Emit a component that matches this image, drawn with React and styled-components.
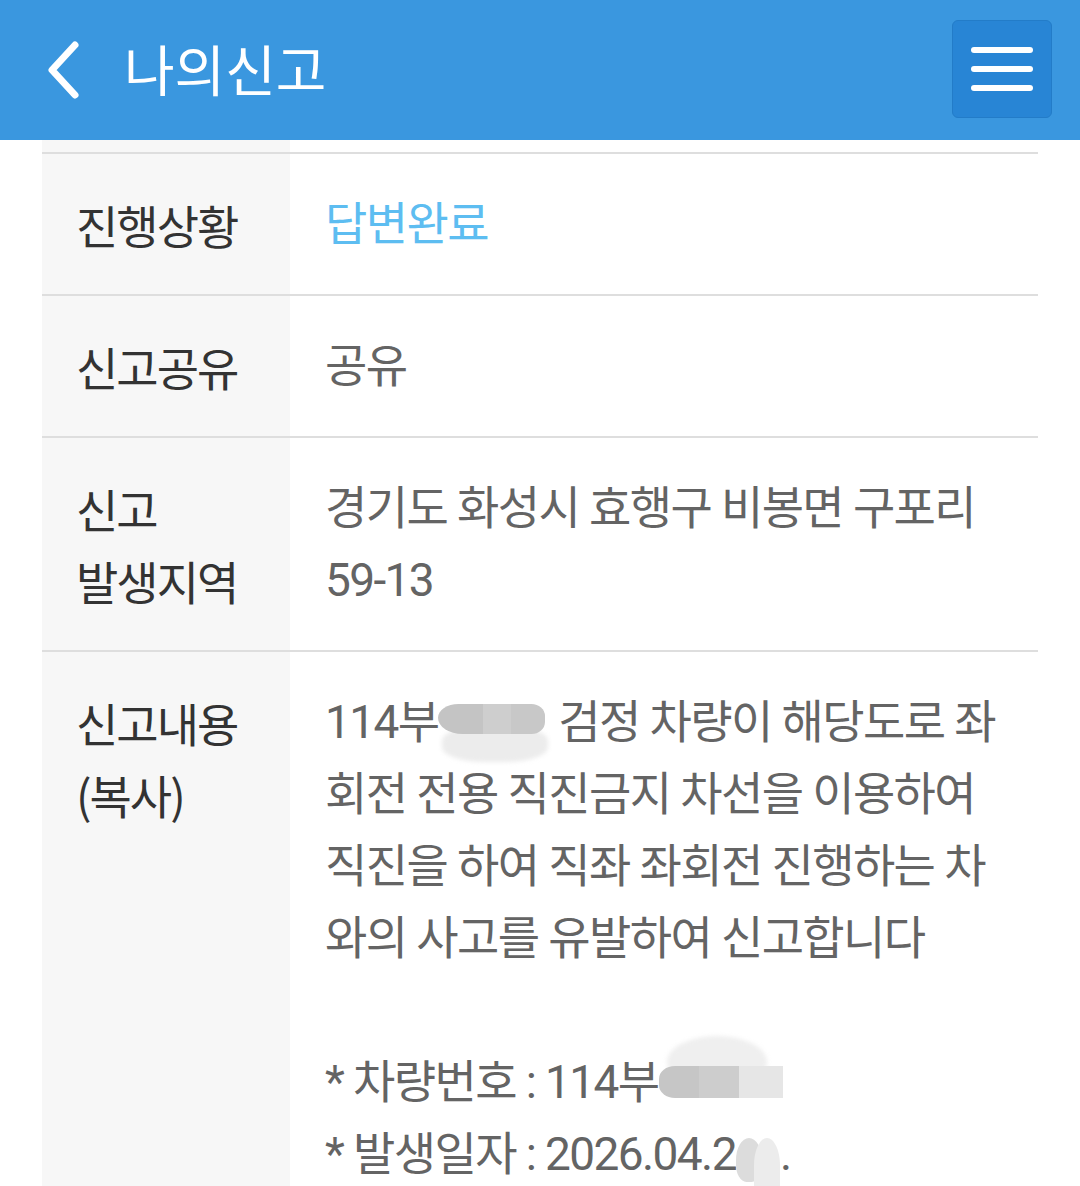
import React from 'react';
import styled, { createGlobalStyle } from 'styled-components';

const GlobalStyle = createGlobalStyle`
  html, body {
    margin: 0;
    padding: 0;
    background: #fff;
  }
  body {
    font-family: Roboto, "Noto Sans CJK KR", "Noto Sans", sans-serif;
    height: 1186px;
    overflow: hidden;
  }
`;

const Header = styled.header`
  height: 140px;
  background: #3a97df;
  display: flex;
  align-items: center;
  padding: 0 28px 0 40px;
  box-sizing: border-box;
`;

const BackButton = styled.button`
  border: 0;
  background: none;
  padding: 0;
  width: 48px;
  height: 64px;
  display: flex;
  align-items: center;
  justify-content: center;
  cursor: pointer;
`;

const Title = styled.h1`
  margin: 0 0 0 36px;
  flex: 1;
  color: #fff;
  font-family: "Noto Sans CJK KR", sans-serif;
  font-size: 55px;
  font-weight: 400;
  letter-spacing: 0;
  line-height: 1;
  padding-bottom: 6px;
`;

const MenuButton = styled.button`
  width: 100px;
  height: 98px;
  margin-top: -2px;
  background: #2885d5;
  border: 1px solid #237cc8;
  border-radius: 6px;
  display: flex;
  flex-direction: column;
  align-items: center;
  justify-content: center;
  gap: 13px;
  padding: 0;
  cursor: pointer;
`;

const MenuLine = styled.span`
  display: block;
  width: 62px;
  height: 6px;
  border-radius: 3px;
  background: #fff;
`;

const Table = styled.div`
  margin: 0 42px;
`;

const Row = styled.div`
  display: grid;
  grid-template-columns: 248px 1fr;
  border-top: 2px solid #dedede;
`;

const TopStub = styled.div`
  height: 12px;
  width: 248px;
  background: #f7f7f7;
`;

const Label = styled.div`
  background: #f7f7f7;
  color: #333;
  padding: 34px 0 34px 34px;
  font-family: "Noto Sans CJK KR", sans-serif;
  font-size: 46px;
  line-height: 72px;
  letter-spacing: -2px;
`;

const Value = styled.div`
  color: ${(p) => (p.$accent ? '#5dbdf1' : '#646464')};
  padding: 34px 0 34px 35px;
  font-size: 46px;
  line-height: 72px;
  letter-spacing: -1.6px;
  white-space: nowrap;
`;

const Line = styled.div`
  height: 72px;
`;

const Redact = styled.span`
  display: inline-block;
  position: relative;
  width: ${(p) => p.$w}px;
  height: 40px;
  vertical-align: ${(p) => p.$lift || -4}px;
`;

const Blob = styled.span`
  position: absolute;
  left: ${(p) => p.$x}px;
  top: ${(p) => p.$y}px;
  width: ${(p) => p.$w}px;
  height: ${(p) => p.$h}px;
  background: ${(p) => p.$c};
  border-radius: ${(p) => p.$r || '0'};
  filter: blur(${(p) => p.$blur || 0}px);
`;

const Chevron = () => (
  <svg width="40" height="60" viewBox="0 0 40 60">
    <path
      d="M31 5 L8 30 L31 55"
      fill="none"
      stroke="#fff"
      strokeWidth="7"
      strokeLinecap="round"
      strokeLinejoin="round"
    />
  </svg>
);

const contentLines = [
  'first',
  '회전 전용 직진금지 차선을 이용하여',
  '직진을 하여 직좌 좌회전 진행하는 차',
  '와의 사고를 유발하여 신고합니다',
  '',
  'plate',
  'date',
];

const renderLine = (line, i) => {
  if (line === 'first') {
    return (
      <Line key={i}>
        114부
        <Redact $w={110}>
          <Blob $x={4} $y={24} $w={106} $h={36} $c="#ececec" $r="40%" $blur={2} />
          <Blob $x={0} $y={2} $w={45} $h={30} $c="#c4c4c4" $r="50% 0 0 60%" />
          <Blob $x={45} $y={2} $w={28} $h={30} $c="#cecece" />
          <Blob $x={73} $y={2} $w={34} $h={30} $c="#c8c8c8" $r="0 40% 40% 0" />
        </Redact>{' '}
        검정 차량이 해당도로 좌
      </Line>
    );
  }
  if (line === 'plate') {
    return (
      <Line key={i}>
        * 차량번호 : 114부
        <Redact $w={124}>
          <Blob $x={8} $y={-26} $w={100} $h={52} $c="#efefef" $r="50%" $blur={2} />
          <Blob $x={0} $y={4} $w={40} $h={32} $c="#c6c6c6" $r="40% 0 0 40%" />
          <Blob $x={40} $y={4} $w={40} $h={32} $c="#cdcdcd" />
          <Blob $x={80} $y={4} $w={44} $h={32} $c="#e6e6e6" />
        </Redact>
      </Line>
    );
  }
  if (line === 'date') {
    return (
      <Line key={i}>
        * 발생일자 : 2026.04.2
        <Redact $w={44} $lift={-12}>
          <Blob $x={0} $y={-4} $w={26} $h={44} $c="#dcdcdc" $r="50% 50% 40% 40%" />
          <Blob $x={18} $y={-4} $w={26} $h={54} $c="#ececec" $r="50% 50% 10% 10%" />
        </Redact>
        .
      </Line>
    );
  }
  return <Line key={i}>{line}</Line>;
};

export default function App() {
  return (
    <>
      <GlobalStyle />
      <Header>
        <BackButton aria-label="back">
          <Chevron />
        </BackButton>
        <Title>나의신고</Title>
        <MenuButton aria-label="menu">
          <MenuLine />
          <MenuLine />
          <MenuLine />
        </MenuButton>
      </Header>
      <Table>
        <TopStub />
        <Row>
          <Label>진행상황</Label>
          <Value $accent>답변완료</Value>
        </Row>
        <Row>
          <Label>신고공유</Label>
          <Value>공유</Value>
        </Row>
        <Row>
          <Label>
            신고
            <br />
            발생지역
          </Label>
          <Value>
            <Line>경기도 화성시 효행구 비봉면 구포리</Line>
            <Line>59-13</Line>
          </Value>
        </Row>
        <Row>
          <Label>
            신고내용
            <br />
            (복사)
          </Label>
          <Value>{contentLines.map(renderLine)}</Value>
        </Row>
      </Table>
    </>
  );
}
